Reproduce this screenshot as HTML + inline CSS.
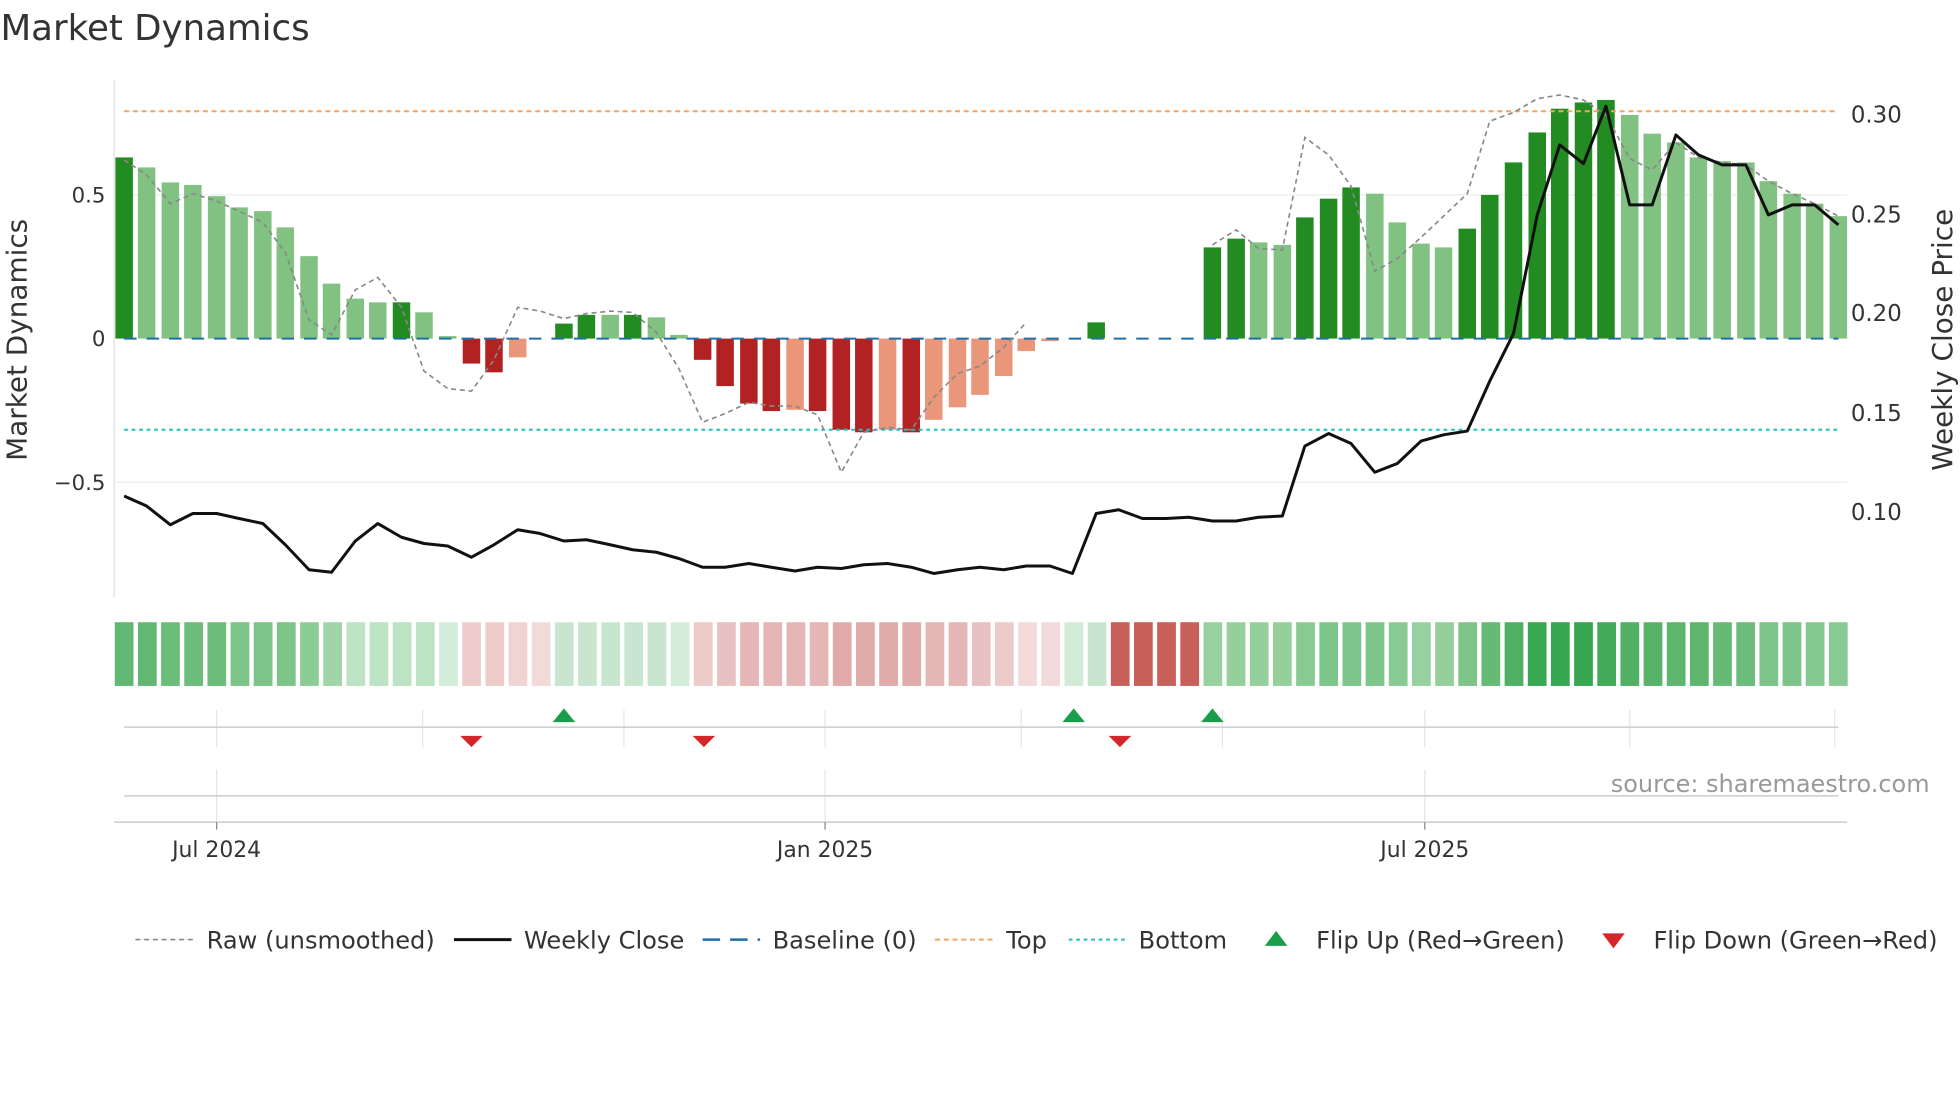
<!DOCTYPE html>
<html><head><meta charset="utf-8">
<style>
html,body{margin:0;padding:0;background:#fff;}
svg{display:block;font-family:"DejaVu Sans","Liberation Sans",sans-serif;}
</style></head>
<body>
<svg width="1960" height="1102" viewBox="0 0 1568 882" xmlns="http://www.w3.org/2000/svg">
<rect width="1568" height="882" fill="#fff"/>
<text x="0" y="32" font-size="28.5" fill="#333">Market Dynamics</text>

<!-- grid -->
<g stroke="#ececec" stroke-width="1">
<line x1="91" y1="156" x2="1478" y2="156"/>
<line x1="91" y1="386" x2="1478" y2="386"/>
</g>
<line x1="91" y1="64" x2="91" y2="478" stroke="#e0e0e0"/>

<!-- axis labels -->
<g font-size="17" fill="#333" text-anchor="end">
<text x="84" y="162">0.5</text>
<text x="84" y="277">0</text>
<text x="84" y="392">−0.5</text>
</g>
<g font-size="18.3" fill="#333">
<text x="1481" y="98">0.30</text>
<text x="1481" y="178">0.25</text>
<text x="1481" y="257">0.20</text>
<text x="1481" y="337">0.15</text>
<text x="1481" y="416">0.10</text>
</g>
<text transform="translate(21,272) rotate(-90)" font-size="22.3" fill="#333" text-anchor="middle">Market Dynamics</text>
<text transform="translate(1562,272) rotate(-90)" font-size="22.3" fill="#333" text-anchor="middle">Weekly Close Price</text>

<!-- bars -->
<g fill="#228b22">
<rect x="92" y="126" width="14" height="145"/>
<rect x="314" y="242" width="14" height="29"/>
<rect x="444" y="259" width="14" height="12"/>
<rect x="462" y="252" width="14" height="19"/>
<rect x="499" y="252" width="14" height="19"/>
<rect x="870" y="258" width="14" height="13"/>
<rect x="963" y="198" width="14" height="73"/>
<rect x="982" y="191" width="14" height="80"/>
<rect x="1037" y="174" width="14" height="97"/>
<rect x="1056" y="159" width="14" height="112"/>
<rect x="1074" y="150" width="14" height="121"/>
<rect x="1167" y="183" width="14" height="88"/>
<rect x="1185" y="156" width="14" height="115"/>
<rect x="1204" y="130" width="14" height="141"/>
<rect x="1223" y="106" width="14" height="165"/>
<rect x="1241" y="87" width="14" height="184"/>
<rect x="1260" y="82" width="14" height="189"/>
<rect x="1278" y="80" width="14" height="191"/>
</g>
<g fill="#81c181">
<rect x="110" y="134" width="14" height="137"/>
<rect x="129" y="146" width="14" height="125"/>
<rect x="147" y="148" width="14" height="123"/>
<rect x="166" y="157" width="14" height="114"/>
<rect x="184" y="166" width="14" height="105"/>
<rect x="203" y="169" width="14" height="102"/>
<rect x="221" y="182" width="14" height="89"/>
<rect x="240" y="205" width="14" height="66"/>
<rect x="258" y="227" width="14" height="44"/>
<rect x="277" y="239" width="14" height="32"/>
<rect x="295" y="242" width="14" height="29"/>
<rect x="332" y="250" width="14" height="21"/>
<rect x="351" y="269" width="14" height="2"/>
<rect x="481" y="252" width="14" height="19"/>
<rect x="518" y="254" width="14" height="17"/>
<rect x="536" y="268" width="14" height="3"/>
<rect x="1000" y="194" width="14" height="77"/>
<rect x="1019" y="196" width="14" height="75"/>
<rect x="1093" y="155" width="14" height="116"/>
<rect x="1111" y="178" width="14" height="93"/>
<rect x="1130" y="195" width="14" height="76"/>
<rect x="1148" y="198" width="14" height="73"/>
<rect x="1297" y="92" width="14" height="179"/>
<rect x="1315" y="107" width="14" height="164"/>
<rect x="1334" y="114" width="14" height="157"/>
<rect x="1352" y="126" width="14" height="145"/>
<rect x="1371" y="129" width="14" height="142"/>
<rect x="1390" y="130" width="14" height="141"/>
<rect x="1408" y="145" width="14" height="126"/>
<rect x="1427" y="155" width="14" height="116"/>
<rect x="1445" y="163" width="14" height="108"/>
<rect x="1464" y="173" width="14" height="98"/>
</g>
<g fill="#b22222">
<rect x="370" y="271" width="14" height="20"/>
<rect x="388" y="271" width="14" height="27"/>
<rect x="555" y="271" width="14" height="17"/>
<rect x="573" y="271" width="14" height="38"/>
<rect x="592" y="271" width="14" height="52"/>
<rect x="610" y="271" width="14" height="58"/>
<rect x="647" y="271" width="14" height="58"/>
<rect x="666" y="271" width="14" height="73"/>
<rect x="684" y="271" width="14" height="75"/>
<rect x="722" y="271" width="14" height="75"/>
</g>
<g fill="#e9967a">
<rect x="407" y="271" width="14" height="15"/>
<rect x="629" y="271" width="14" height="57"/>
<rect x="703" y="271" width="14" height="73"/>
<rect x="740" y="271" width="14" height="65"/>
<rect x="759" y="271" width="14" height="55"/>
<rect x="777" y="271" width="14" height="45"/>
<rect x="796" y="271" width="14" height="30"/>
<rect x="814" y="271" width="14" height="10"/>
<rect x="833" y="271" width="14" height="2"/>
</g>

<!-- ref lines -->
<line x1="99" y1="89" x2="1471" y2="89" stroke="#f4a460" stroke-width="1.6" stroke-dasharray="4,3"/>
<line x1="99" y1="344" x2="1471" y2="344" stroke="#20c0c8" stroke-width="1.6" stroke-dasharray="3,3"/>
<line x1="99" y1="271" x2="1471" y2="271" stroke="#1f6fa8" stroke-width="1.6" stroke-dasharray="10,8"/>

<!-- raw -->
<g fill="none" stroke="#888" stroke-width="1.3" stroke-dasharray="4,3">
<polyline points="99,128 117,140 136,163 154,155 173,161 191,169 210,178 228,202 247,256 265,268 284,232 302,222 321,246 339,297 358,311 377,313 395,288 414,246 432,249 451,255 469,251 488,249 506,250 525,266 543,295 562,338 580,331 599,322 617,325 636,325 654,332 673,378 691,346 710,342 729,344 747,318 766,299 784,293 803,278 821,258"/>
<polyline points="970,196 989,184 1007,199 1026,200 1044,110 1063,124 1081,149 1100,217 1118,207 1137,190 1155,173 1174,155 1192,97 1211,90 1230,79 1248,76 1267,80 1285,92 1304,127 1322,136 1341,114 1359,126 1378,130 1397,132 1415,145 1434,155 1452,163 1471,173"/>
</g>
<!-- close -->
<polyline fill="none" stroke="#111" stroke-width="2.4" stroke-linejoin="round" points="99,397 117,405 136,420 154,411 173,411 191,415 210,419 228,436 247,456 265,458 284,433 302,419 321,430 339,435 358,437 377,446 395,436 414,424 432,427 451,433 469,432 488,436 506,440 525,442 543,447 562,454 580,454 599,451 617,454 636,457 654,454 673,455 691,452 710,451 729,454 747,459 766,456 784,454 803,456 821,453 840,453 858,459 877,411 895,408 914,415 933,415 951,414 970,417 989,417 1007,414 1026,413 1044,357 1063,347 1081,355 1100,378 1118,371 1137,353 1155,348 1174,345 1192,305 1211,267 1230,172 1248,116 1267,131 1285,85 1304,164 1322,164 1341,108 1359,124 1378,132 1397,132 1415,172 1434,164 1452,164 1471,180"/>

<!-- heat strip -->
<g transform="translate(91.5,498)">
<rect x="0" width="15" height="51" fill="#62b872"/>
<rect x="18.54" width="15" height="51" fill="#62b872"/>
<rect x="37.08" width="15" height="51" fill="#6cbd79"/>
<rect x="55.62" width="15" height="51" fill="#6cbd79"/>
<rect x="74.16" width="15" height="51" fill="#6cbd79"/>
<rect x="92.7" width="15" height="51" fill="#7cc488"/>
<rect x="111.24" width="15" height="51" fill="#7cc488"/>
<rect x="129.78" width="15" height="51" fill="#7cc488"/>
<rect x="148.32" width="15" height="51" fill="#8ccd96"/>
<rect x="166.86" width="15" height="51" fill="#a0d5a8"/>
<rect x="185.4" width="15" height="51" fill="#bde3c5"/>
<rect x="203.94" width="15" height="51" fill="#bde3c5"/>
<rect x="222.48" width="15" height="51" fill="#bde3c5"/>
<rect x="241.02" width="15" height="51" fill="#bde3c5"/>
<rect x="259.56" width="15" height="51" fill="#d4ecda"/>
<rect x="278.1" width="15" height="51" fill="#efcccc"/>
<rect x="296.64" width="15" height="51" fill="#efcccc"/>
<rect x="315.18" width="15" height="51" fill="#f0d4d4"/>
<rect x="333.72" width="15" height="51" fill="#f2dada"/>
<rect x="352.26" width="15" height="51" fill="#c8e6cf"/>
<rect x="370.8" width="15" height="51" fill="#c8e6cf"/>
<rect x="389.34" width="15" height="51" fill="#c8e6cf"/>
<rect x="407.88" width="15" height="51" fill="#c8e6cf"/>
<rect x="426.42" width="15" height="51" fill="#c8e6cf"/>
<rect x="444.96" width="15" height="51" fill="#d4ecda"/>
<rect x="463.5" width="15" height="51" fill="#eccaca"/>
<rect x="482.04" width="15" height="51" fill="#e8c2c2"/>
<rect x="500.58" width="15" height="51" fill="#e4b6b5"/>
<rect x="519.12" width="15" height="51" fill="#e4b6b5"/>
<rect x="537.66" width="15" height="51" fill="#e4b6b5"/>
<rect x="556.2" width="15" height="51" fill="#e4b6b5"/>
<rect x="574.74" width="15" height="51" fill="#e0aaa9"/>
<rect x="593.28" width="15" height="51" fill="#e0aaa9"/>
<rect x="611.82" width="15" height="51" fill="#e0aaa9"/>
<rect x="630.36" width="15" height="51" fill="#e0aaa9"/>
<rect x="648.9" width="15" height="51" fill="#e4b6b5"/>
<rect x="667.44" width="15" height="51" fill="#e4b6b5"/>
<rect x="685.98" width="15" height="51" fill="#e8c2c2"/>
<rect x="704.52" width="15" height="51" fill="#eccaca"/>
<rect x="723.06" width="15" height="51" fill="#f2dada"/>
<rect x="741.6" width="15" height="51" fill="#f2dada"/>
<rect x="760.14" width="15" height="51" fill="#d2ebd8"/>
<rect x="778.68" width="15" height="51" fill="#c8e6cf"/>
<rect x="797.22" width="15" height="51" fill="#c8605a"/>
<rect x="815.76" width="15" height="51" fill="#c8605a"/>
<rect x="834.3" width="15" height="51" fill="#c8605a"/>
<rect x="852.84" width="15" height="51" fill="#c8605a"/>
<rect x="871.38" width="15" height="51" fill="#98d1a0"/>
<rect x="889.92" width="15" height="51" fill="#94cf9c"/>
<rect x="908.46" width="15" height="51" fill="#94cf9c"/>
<rect x="927" width="15" height="51" fill="#94cf9c"/>
<rect x="945.54" width="15" height="51" fill="#88ca92"/>
<rect x="964.08" width="15" height="51" fill="#7dc588"/>
<rect x="982.62" width="15" height="51" fill="#7dc588"/>
<rect x="1001.16" width="15" height="51" fill="#7dc588"/>
<rect x="1019.7" width="15" height="51" fill="#88ca92"/>
<rect x="1038.24" width="15" height="51" fill="#98d1a0"/>
<rect x="1056.78" width="15" height="51" fill="#94cf9c"/>
<rect x="1075.32" width="15" height="51" fill="#7cc488"/>
<rect x="1093.86" width="15" height="51" fill="#66ba74"/>
<rect x="1112.4" width="15" height="51" fill="#52b064"/>
<rect x="1130.94" width="15" height="51" fill="#3aa853"/>
<rect x="1149.48" width="15" height="51" fill="#36a650"/>
<rect x="1168.02" width="15" height="51" fill="#36a650"/>
<rect x="1186.56" width="15" height="51" fill="#42aa58"/>
<rect x="1205.1" width="15" height="51" fill="#52b064"/>
<rect x="1223.64" width="15" height="51" fill="#58b369"/>
<rect x="1242.18" width="15" height="51" fill="#5eb56e"/>
<rect x="1260.72" width="15" height="51" fill="#5eb56e"/>
<rect x="1279.26" width="15" height="51" fill="#66ba74"/>
<rect x="1297.8" width="15" height="51" fill="#6cbd79"/>
<rect x="1316.34" width="15" height="51" fill="#7cc488"/>
<rect x="1334.88" width="15" height="51" fill="#7cc488"/>
<rect x="1353.42" width="15" height="51" fill="#84c890"/>
<rect x="1371.96" width="15" height="51" fill="#88ca94"/>
</g>

<!-- flip panel -->
<g stroke="#e6e6e6" stroke-width="1">
<line x1="173" y1="568" x2="173" y2="598"/>
<line x1="338" y1="568" x2="338" y2="598"/>
<line x1="499" y1="568" x2="499" y2="598"/>
<line x1="660" y1="568" x2="660" y2="598"/>
<line x1="817" y1="568" x2="817" y2="598"/>
<line x1="978" y1="568" x2="978" y2="598"/>
<line x1="1140" y1="568" x2="1140" y2="598"/>
<line x1="1304" y1="568" x2="1304" y2="598"/>
<line x1="1468" y1="568" x2="1468" y2="598"/>
<line x1="173" y1="616" x2="173" y2="660"/>
<line x1="660" y1="616" x2="660" y2="660"/>
<line x1="1140" y1="616" x2="1140" y2="660"/>
</g>
<line x1="99" y1="582" x2="1471" y2="582" stroke="#ccc" stroke-width="1.2"/>
<line x1="99" y1="637" x2="1471" y2="637" stroke="#ccc" stroke-width="1.2"/>
<line x1="91" y1="658" x2="1478" y2="658" stroke="#ccc" stroke-width="1.2"/>
<g fill="#1a9e4a">
<polygon points="442,578 451,567 460,578"/>
<polygon points="850,578 859,567 868,578"/>
<polygon points="961,578 970,567 979,578"/>
</g>
<g fill="#d62728">
<polygon points="368,589 386,589 377,598"/>
<polygon points="554,589 572,589 563,598"/>
<polygon points="887,589 905,589 896,598"/>
</g>
<text x="1544" y="634" font-size="19.2" fill="#999" text-anchor="end">source: sharemaestro.com</text>
<g stroke="#888"><line x1="173" y1="658" x2="173" y2="664"/><line x1="660" y1="658" x2="660" y2="664"/><line x1="1140" y1="658" x2="1140" y2="664"/></g>
<g font-size="17.5" fill="#333" text-anchor="middle">
<text x="173" y="686">Jul 2024</text>
<text x="660" y="686">Jan 2025</text>
<text x="1140" y="686">Jul 2025</text>
</g>

<!-- legend -->
<g font-size="19.3" fill="#333">
<line x1="108" y1="752" x2="154" y2="752" stroke="#888" stroke-width="1.3" stroke-dasharray="4,3"/>
<text x="165" y="759">Raw (unsmoothed)</text>
<line x1="363" y1="752" x2="409" y2="752" stroke="#111" stroke-width="2.4"/>
<text x="419" y="759">Weekly Close</text>
<line x1="562" y1="752" x2="608" y2="752" stroke="#1f6fa8" stroke-width="2" stroke-dasharray="14,8"/>
<text x="618" y="759">Baseline (0)</text>
<line x1="748" y1="752" x2="794" y2="752" stroke="#f4a460" stroke-width="1.6" stroke-dasharray="4,3"/>
<text x="805" y="759">Top</text>
<line x1="855" y1="752" x2="901" y2="752" stroke="#20c0c8" stroke-width="1.6" stroke-dasharray="3,3"/>
<text x="911" y="759">Bottom</text>
<polygon points="1012,757 1021,745 1030,757" fill="#1a9e4a"/>
<text x="1053" y="759">Flip Up (Red→Green)</text>
<polygon points="1282,747 1300,747 1291,759" fill="#d62728"/>
<text x="1323" y="759">Flip Down (Green→Red)</text>
</g>
</svg>
</body></html>
